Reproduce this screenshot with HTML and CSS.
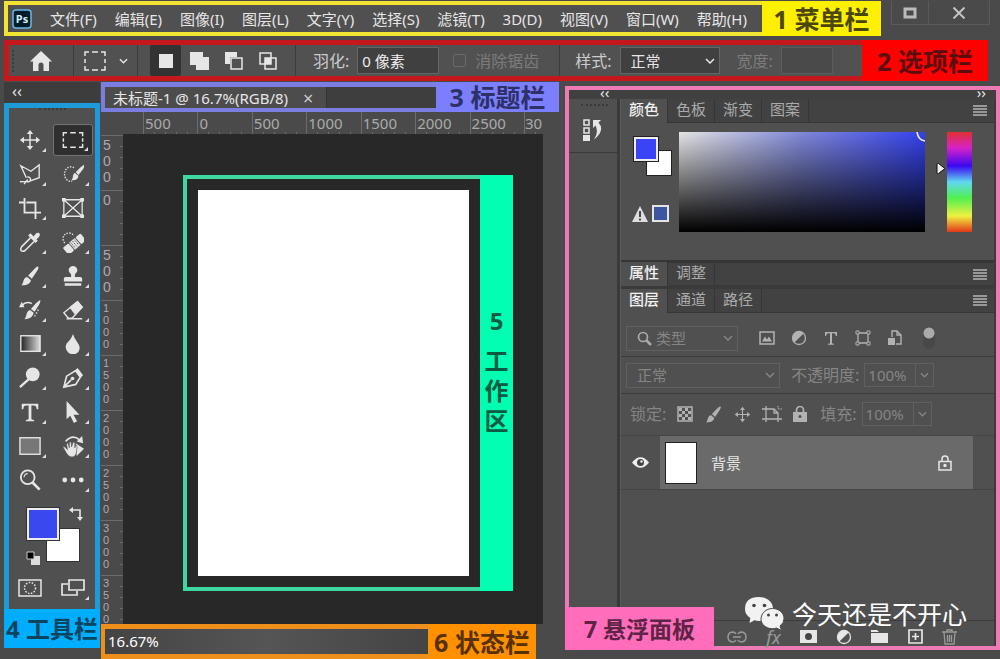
FILE: index.html
```html
<!DOCTYPE html>
<html lang="zh-CN">
<head>
<meta charset="utf-8">
<meta name="viewport" content="width=device-width, initial-scale=1">
<title>未标题-1 @ 16.7%(RGB/8)</title>
<link rel="stylesheet" href="styles.css">
</head>
<body>
<svg class="defs" aria-hidden="true">
  <defs>
    <linearGradient id="fade"><stop offset="0" stop-color="#222"/><stop offset="1" stop-color="#ddd"/></linearGradient>
    <symbol id="chevron" viewBox="0 0 10 6"><path d="M1 1l4 4 4-4" fill="none" stroke="currentColor" stroke-width="1.5"/></symbol>
    <symbol id="lines" viewBox="0 0 14 11"><path d="M0 1h14M0 4h14M0 7h14M0 10h14" stroke="currentColor" stroke-width="1.3"/></symbol>
    <symbol id="brush" viewBox="0 0 24 24"><path d="M21 2q1 1-1 4l-6 9-4-3.500 7-7.500q3-3 4-2zM9 13l4 3.500c-1 5-6 5.500-10.500 5.500 3-2 1.500-8.500 6.500-9z" fill="currentColor"/></symbol>
    <symbol id="move" viewBox="0 0 24 24"><path d="M12 4v16M4 12h16" stroke="currentColor" stroke-width="1.6"/><path d="M12 1l3.500 4.500h-7zM12 23l3.500-4.500h-7zM1 12l4.500-3.500v7zM23 12l-4.500-3.500v7z" fill="currentColor"/></symbol>
    <symbol id="halftone" viewBox="0 0 16 16"><circle cx="8" cy="8" r="6.500" fill="none" stroke="currentColor" stroke-width="1.300"/><path d="M12.600 3.400A6.500 6.500 0 1 0 3.400 12.600z" fill="currentColor"/></symbol>
    <symbol id="type" viewBox="0 0 24 24"><path d="M3 3h18v6h-1.700c-.3-2.800-1-4-3.300-4h-2.500v14c0 1.200.8 1.500 3 1.600V22H7.500v-1.400c2.200-.1 3-.4 3-1.600V5H8C5.700 5 5 6.200 4.700 9H3z" fill="currentColor"/></symbol>
  </defs>
</svg>

<header class="top">
  <nav class="menubar" aria-label="菜单栏">
    <svg class="logo" viewBox="0 0 20 20" aria-label="Ps"><rect x="1" y="1" width="18" height="18" rx="3" fill="#001d2b" stroke="#69b7e8" stroke-width="1.500"/><text x="10" y="14" text-anchor="middle" class="logo-text">Ps</text></svg>
    <button>文件(F)</button><button>编辑(E)</button><button>图像(I)</button><button>图层(L)</button><button>文字(Y)</button><button>选择(S)</button><button>滤镜(T)</button><button>3D(D)</button><button>视图(V)</button><button>窗口(W)</button><button>帮助(H)</button>
  </nav>
  <strong class="tag tag-yellow">1 菜单栏</strong>
  <div class="window-buttons">
    <button aria-label="最大化"><svg width="14" height="12" viewBox="0 0 14 12"><path d="M2 2h10v8H2z" fill="none" stroke="#bbb" stroke-width="3"/></svg></button>
    <button aria-label="关闭"><svg width="14" height="12" viewBox="0 0 14 12"><path d="M1.500.5l11 11M12.500.5l-11 11" stroke="#c4c4c4" stroke-width="2"/></svg></button>
  </div>
</header>

<section class="options" aria-label="选项栏">
  <div class="options-row">
    <span class="grip-v"></span>
    <button class="home" aria-label="主页"><svg width="22" height="20" viewBox="0 0 22 20"><path d="M11 0l11 10.500h-3V20h-5.500v-6a2.500 2.500 0 0 0-5 0v6H3v-9.500H0z" fill="currentColor"/></svg></button>
    <button class="preset" aria-label="矩形选框">
      <svg width="22" height="20" viewBox="0 0 22 20"><path d="M1 5V1h4M8 1h6M17 1h4v4M21 8v4M21 15v4h-4M14 19H8M5 19H1v-4M1 12V8" fill="none" stroke="currentColor" stroke-width="1.500"/></svg>
      <svg width="9" height="6"><use href="#chevron"/></svg>
    </button>
    <div class="modes">
      <button class="active" aria-label="新选区"><svg width="14" height="14"><path d="M0 0h14v14H0z" fill="currentColor"/></svg></button>
      <button aria-label="添加"><svg width="20" height="20"><path d="M0 1h13v5h6v13H6v-5H0z" fill="currentColor"/></svg></button>
      <button aria-label="减去"><svg width="18" height="18"><path d="M0 0h12v5H5v7H0z" fill="currentColor"/><path d="M6 6h11v11H6z" fill="none" stroke="currentColor" stroke-width="1.500"/></svg></button>
      <button aria-label="交叉"><svg width="18" height="18"><path d="M1 1h11v11H1zM6 6h11v11H6z" fill="none" stroke="currentColor" stroke-width="1.500"/><path d="M6 6h6v6H6z" fill="currentColor"/></svg></button>
    </div>
    <div class="field feather"><label for="feather">羽化:</label><input id="feather" class="box" value="0 像素"></div>
    <label class="field alias dim"><input type="checkbox" disabled>消除锯齿</label>
    <div class="field style-field"><label for="style">样式:</label>
      <span class="select"><select id="style"><option>正常</option></select><svg width="10" height="6"><use href="#chevron"/></svg></span></div>
    <div class="field dim"><label for="width">宽度:</label><input id="width" class="box box-short" disabled></div>
  </div>
  <strong class="tag tag-red">2 选项栏</strong>
</section>

<main class="main">
  <aside class="left">
    <button class="collapse" aria-label="折叠">‹‹</button>
    <div class="toolframe">
      <span class="grip-h"></span>
      <div class="tools">
        <button class="more" aria-label="移动"><svg viewBox="0 0 24 24"><use href="#move"/></svg></button>
        <button class="more active" aria-label="矩形选框"><svg viewBox="0 0 24 24"><path d="M1.500 8V4h4M9 4h6M18.500 4h4v4M22.500 10v4M22.500 16v4h-4M15 20H9M5.500 20h-4v-4M1.500 14v-4" fill="none" stroke="currentColor" stroke-width="1.600"/></svg></button>
        <button class="more" aria-label="多边形套索"><svg viewBox="0 0 24 24"><path d="M8 16L2 3l11 6 9-7v14l-11 4M9 15.500a2.600 2.600 0 1 1-.5 4.500M8.500 20L1 20.500M9.500 18l-4 5" fill="none" stroke="currentColor" stroke-width="1.500"/></svg></button>
        <button class="more" aria-label="快速选择"><svg viewBox="0 0 24 24"><path d="M13 5a7 8 0 1 0-2 15" fill="none" stroke="currentColor" stroke-width="1.500" stroke-dasharray="1.500 1.500"/><path d="M24 2q1 2-2 6l-4 5-3-3 5-5zM14 11l4 3c-1 5-4 5-8 5 3-2 1-7 4-8z" fill="currentColor"/></svg></button>
        <button class="more" aria-label="裁剪"><svg viewBox="0 0 24 24"><path d="M6 1v16h18M0 6h5M8 6h10v18" fill="none" stroke="currentColor" stroke-width="2"/></svg></button>
        <button aria-label="画框"><svg viewBox="0 0 24 24"><path d="M2 3h20v18H2zM2 3l20 18M22 3L2 21" fill="none" stroke="currentColor" stroke-width="1.400"/><path d="M0 1h4v4H0zM20 1h4v4h-4zM0 19h4v4H0zM20 19h4v4h-4z" fill="currentColor"/></svg></button>
        <button class="more" aria-label="吸管"><svg viewBox="0 0 24 24"><path d="M12.500 7.500L3 17q-2 3-.5 4.500T7 21l9.500-9.500" fill="none" stroke="currentColor" stroke-width="1.700"/><path d="M16 6c2-3 4-5 6-3.500s0 4.500-3 6.500l1.500 1.500-2.500 2.500-8-8L12.500 2.500z" fill="currentColor"/></svg></button>
        <button class="more" aria-label="修复画笔"><svg viewBox="0 0 24 24"><path d="M3 13a6 6 0 1 1 9-9" fill="none" stroke="currentColor" stroke-width="1.500" stroke-dasharray="1.500 1.500"/><g transform="rotate(-40 14 14)" fill="currentColor"><rect x="1" y="9" width="8" height="10" rx="1.500"/><rect x="19" y="9" width="7" height="10" rx="1.500"/><path d="M10 9h8v10h-8z"/><path d="M11.500 10v8M14 10v8M16.500 10v8" stroke="#4f4f4f" stroke-dasharray="1.500 1"/></g></svg></button>
        <button class="more" aria-label="画笔"><svg viewBox="0 0 24 24"><use href="#brush"/></svg></button>
        <button class="more" aria-label="仿制图章"><svg viewBox="0 0 24 24"><path d="M12 1a4.500 4.500 0 0 1 3 8c-1 1-1 2-1 4h6q2 0 2 2v3H2v-3q0-2 2-2h6c0-2 0-3-1-4a4.500 4.500 0 0 1 3-8zM3 20h18v2.500H3z" fill="currentColor"/></svg></button>
        <button class="more" aria-label="历史记录画笔"><svg viewBox="0 0 24 24"><path d="M23 1q1 1-1 5l-5 8-4-3 6-7zM12 12l4 3c-1 5-5 7-10 7 3-3 1-8 6-10z" fill="currentColor"/><path d="M3 7q5-5 11-2" fill="none" stroke="currentColor" stroke-width="1.500"/><path d="M0 9l3-6 3 6z" fill="currentColor"/><path d="M17 19l5-9" stroke="currentColor" stroke-width="1.500" stroke-dasharray="1.500 2"/></svg></button>
        <button class="more" aria-label="橡皮擦"><svg viewBox="0 0 24 24"><path d="M2 15l5 6h4l11-12-5-6zM5 21.500h17" fill="none" stroke="currentColor" stroke-width="1.500"/><path d="M8 9l9-7 6 7-9 8z" fill="currentColor"/></svg></button>
        <button class="more" aria-label="渐变"><svg viewBox="0 0 24 24"><rect x="2" y="3" width="21" height="17" fill="url(#fade)" stroke="currentColor" stroke-width="1.500"/></svg></button>
        <button class="more" aria-label="模糊"><svg viewBox="0 0 24 24"><path d="M12 1q1.500 5 5 9.500t1.500 9Q16 23 12 23t-6.500-3.500-.5-8Q10.500 6 12 1z" fill="currentColor"/></svg></button>
        <button class="more" aria-label="减淡"><svg viewBox="0 0 24 24"><circle cx="15" cy="8" r="7.500" fill="currentColor"/><path d="M11 13l-10 9" stroke="currentColor" stroke-width="2.500"/></svg></button>
        <button class="more" aria-label="钢笔"><svg viewBox="0 0 24 24"><path d="M2 22l3-12L15 4l5 7-5 8zM2 22l8-8" fill="none" stroke="currentColor" stroke-width="1.800"/><circle cx="11.500" cy="12.500" r="2" fill="currentColor"/><path d="M14 4l3-3 6 8-3 3z" fill="currentColor"/></svg></button>
        <button class="more" aria-label="文字"><svg viewBox="0 0 24 24"><use href="#type"/></svg></button>
        <button class="more" aria-label="路径选择"><svg viewBox="0 0 24 24"><path d="M5 0l14 15h-6.500l4 7-3.500 2-4-8-4 4z" fill="currentColor"/></svg></button>
        <button class="more" aria-label="矩形"><svg viewBox="0 0 24 24"><rect x="1" y="3" width="22" height="18" fill="#777" stroke="currentColor" stroke-width="1.500"/></svg></button>
        <button class="more" aria-label="旋转视图"><svg viewBox="0 0 24 24"><path d="M4 7q7-8 15-2" fill="none" stroke="currentColor" stroke-width="1.800"/><path d="M16 7l6-6 1 8zM15 9l9 6-8 8z" fill="currentColor"/><path d="M1 13q1-1 3 1l2 2-1-6q1-2 2 0l1 4V8q1-1 2 0l.5 5L12 8q2-1 2 1v5l1-3q2 0 1.500 2l-1 7q-1 4-4.500 4-4 0-6-4z" fill="currentColor" stroke="#4f4f4f" stroke-width=".6"/></svg></button>
        <button aria-label="缩放"><svg viewBox="0 0 24 24"><circle cx="9.500" cy="9" r="7.500" fill="none" stroke="currentColor" stroke-width="2"/><path d="M5.500 9a4 4 0 0 1 4-4" fill="none" stroke="currentColor" stroke-width="1.300"/><path d="M14.500 14.500l8 8" stroke="currentColor" stroke-width="3"/></svg></button>
        <button class="more" aria-label="编辑工具栏"><svg viewBox="0 0 24 24"><g fill="currentColor"><circle cx="3" cy="12" r="2.600"/><circle cx="12" cy="12" r="2.600"/><circle cx="21" cy="12" r="2.600"/></g></svg></button>
      </div>
      <div class="swatches">
        <span class="sw sw-back"></span><span class="sw sw-front"></span>
        <svg class="swap" viewBox="0 0 14 14" width="14" height="14"><path d="M3 3h8v8" fill="none" stroke="currentColor" stroke-width="1.600"/><path d="M0 3l4-3v6zM11 14l-3-4h6z" fill="currentColor"/></svg>
        <svg class="reset" viewBox="0 0 14 14" width="14" height="14"><path d="M5 5h9v9H5z" fill="#ddd"/><path d="M1 1h7v7H1z" fill="#000" stroke="#ccc"/></svg>
      </div>
      <div class="view-buttons">
        <button aria-label="快速蒙版"><svg width="24" height="20" viewBox="0 0 24 20"><path d="M1 2h22v16H1z" fill="none" stroke="currentColor" stroke-width="1.500"/><circle cx="12" cy="10" r="5.500" fill="none" stroke="currentColor" stroke-width="1.500" stroke-dasharray="1.500 1.500"/></svg></button>
        <button class="more" aria-label="屏幕模式"><svg width="24" height="20" viewBox="0 0 24 20"><path d="M7 6H1v11h15v-4M8 2h15v10H8z" fill="none" stroke="currentColor" stroke-width="1.700"/></svg></button>
      </div>
      <strong class="tag tag-blue">4 工具栏</strong>
    </div>
  </aside>

  <section class="document">
    <div class="title-row">
      <div class="title-frame"><div class="tab">未标题-1 @ 16.7%(RGB/8)<button aria-label="关闭文档">×</button></div></div>
      <strong class="tag tag-violet">3 标题栏</strong>
    </div>
    <div class="ruler-x"><span>500</span><span>0</span><span>500</span><span>1000</span><span>1500</span><span>2000</span><span>2500</span><span>30</span></div>
    <div class="work-row">
      <div class="ruler-y"><span>5<br>0<br>0</span><span>0</span><span>5<br>0<br>0</span><span class="four">1<br>0<br>0<br>0</span><span class="four">1<br>5<br>0<br>0</span><span class="four">2<br>0<br>0<br>0</span><span class="four">2<br>5<br>0<br>0</span><span class="four">3<br>0<br>0<br>0</span><span class="four">3<br>5<br>0<br>0</span></div>
      <div class="canvas">
        <div class="work-frame"><div class="page"></div></div>
        <strong class="tag tag-green"><span>5</span><span>工</span><span>作</span><span>区</span></strong>
      </div>
    </div>
    <footer class="status-row"><div class="status">16.67%</div><strong class="tag tag-orange">6 状态栏</strong></footer>
  </section>

  <aside class="floating" aria-label="悬浮面板">
    <div class="dock-head"><button aria-label="展开">‹‹</button><button aria-label="折叠">››</button></div>
    <div class="dock-body">
      <div class="mini">
        <span class="grip-h"></span>
        <button aria-label="历史记录"><svg width="22" height="24" viewBox="0 0 22 24"><path d="M2 2h5v5H2zM2 10h5v5H2z" fill="none" stroke="currentColor" stroke-width="1.500"/><path d="M1 17h7v6H1z" fill="currentColor"/><path d="M11 2h8l-2.500 2.500q7 8-4.500 17 5-7 1.500-14L11 10z" fill="currentColor"/></svg></button>
      </div>
      <div class="panels">
        <div class="tabs"><button class="on">颜色</button><button>色板</button><button>渐变</button><button>图案</button><svg width="14" height="11"><use href="#lines"/></svg></div>
        <div class="color-body">
          <div class="color-left">
            <div class="mini-swatches"><span class="ms-back"></span><span class="ms-front"></span></div>
            <div class="warn"><svg width="16" height="16" viewBox="0 0 16 16"><path d="M8 0l8 16H0z" fill="#ddd"/><path d="M8 5v6M8 12.500v2" stroke="#444" stroke-width="2"/></svg><span class="safe"></span></div>
          </div>
          <div class="spectrum"><svg width="9" height="10" viewBox="0 0 9 10"><path d="M1 0q1 8 8 9" fill="none" stroke="#e8e8ff" stroke-width="1.700"/></svg></div>
          <svg class="marker" width="11" height="13" viewBox="0 0 11 13"><path d="M2 2q0-1 1.500-.5L10 6.500 3.500 11.500Q2 12 2 11z" fill="#eee" stroke="#111"/></svg>
          <div class="hue"></div>
        </div>
        <div class="tabs tabs-closed"><button class="on">属性</button><button>调整</button><svg width="14" height="11"><use href="#lines"/></svg></div>
        <div class="tabs"><button class="on">图层</button><button>通道</button><button>路径</button><svg width="14" height="11"><use href="#lines"/></svg></div>
        <div class="row filter">
          <span class="select kind"><svg class="lens" width="15" height="15" viewBox="0 0 15 15"><circle cx="6" cy="6" r="4.500" fill="none" stroke="#aaa" stroke-width="1.700"/><path d="M9.500 9.500L14 14" stroke="#aaa" stroke-width="2.500"/></svg><select aria-label="类型" disabled><option>类型</option></select><svg width="10" height="6"><use href="#chevron"/></svg></span>
          <div class="filter-icons">
            <svg width="16" height="14" viewBox="0 0 16 14"><path d="M1 1h14v12H1z" fill="none" stroke="currentColor" stroke-width="1.500"/><path d="M3 10.500l3-5 2 3 2-3 3 5z" fill="currentColor"/></svg>
            <svg width="16" height="16"><use href="#halftone"/></svg>
            <svg width="16" height="16"><use href="#type"/></svg>
            <svg width="16" height="16" viewBox="0 0 16 16"><path d="M3 3h10v10H3z" fill="none" stroke="currentColor" stroke-width="1.300"/><path d="M1 1h3v3H1zM12 1h3v3h-3zM1 12h3v3H1zM12 12h3v3h-3z" fill="#4f4f4f" stroke="currentColor"/></svg>
            <svg width="16" height="16" viewBox="0 0 16 16"><path d="M5 7V1h5l4 4v9H9M10 1v4h4" fill="none" stroke="currentColor" stroke-width="1.400"/><path d="M1 8h7v7H1z" fill="currentColor"/></svg>
          </div>
          <span class="toggle"></span>
        </div>
        <div class="row blend">
          <span class="select mode"><select aria-label="混合模式" disabled><option>正常</option></select><svg width="10" height="6"><use href="#chevron"/></svg></span>
          <label for="opacity">不透明度:</label>
          <span class="percent"><input id="opacity" value="100%" disabled><svg width="9" height="6"><use href="#chevron"/></svg></span>
        </div>
        <div class="row lock">
          <span>锁定:</span>
          <div class="lock-icons">
            <svg width="16" height="16" viewBox="0 0 16 16"><path d="M1 1h14v14H1z" fill="none" stroke="currentColor" stroke-width="1.500"/><path d="M2 2h3v3H2zM8 2h3v3H8zM5 5h3v3H5zM11 5h3v3h-3zM2 8h3v3H2zM8 8h3v3H8zM5 11h3v3H5zM11 11h3v3h-3z" fill="currentColor"/></svg>
            <svg width="19" height="19"><use href="#brush"/></svg>
            <svg width="17" height="17"><use href="#move"/></svg>
            <svg width="20" height="16" viewBox="0 0 20 16"><path d="M4 0v16M0 3h12l4 4v9M0 13h20M12 3v4h4" fill="none" stroke="currentColor" stroke-width="1.300"/><path d="M16 3h4M16 0v3" stroke="currentColor" stroke-dasharray="1.500 1"/></svg>
            <svg width="14" height="16" viewBox="0 0 14 16"><path d="M3.500 7V4a3.500 3.500 0 0 1 7 0v3" fill="none" stroke="currentColor" stroke-width="1.700"/><path d="M0 6h14v10H0z" fill="currentColor"/><circle cx="7" cy="10.500" r="1.500" fill="#4f4f4f"/></svg>
          </div>
          <label for="fill">填充:</label>
          <span class="percent"><input id="fill" value="100%" disabled><svg width="9" height="6"><use href="#chevron"/></svg></span>
        </div>
        <div class="layer">
          <button class="eye" aria-label="可见性"><svg width="17" height="11" viewBox="0 0 17 11"><path d="M0 5.500Q8.500-5 17 5.500 8.500 16 0 5.500z" fill="#eee"/><circle cx="8.500" cy="5.500" r="3.500" fill="#444"/><circle cx="9.500" cy="4.500" r="1.200" fill="#eee"/></svg></button>
          <div class="layer-item"><span class="thumb"></span><span>背景</span>
            <svg width="14" height="16" viewBox="0 0 14 16"><path d="M4 6V4a3 3 0 0 1 6 0v2M1 6.500h12V15H1z" fill="none" stroke="currentColor" stroke-width="1.500"/><circle cx="7" cy="10.500" r="1.700" fill="currentColor"/></svg></div>
        </div>
        <div class="empty"></div>
        <div class="layer-actions">
          <button class="off" aria-label="链接图层"><svg width="20" height="12" viewBox="0 0 20 12"><path d="M9 3Q8 1 5.500 1 1 1.500 1 6t4.500 5Q8 11 9 9M11 3q1-2 3.500-2Q19 1.500 19 6t-4.500 5q-2.500 0-3.500-2M6 6h8" fill="none" stroke="currentColor" stroke-width="1.500"/></svg></button>
          <button class="off fx">fx</button>
          <button aria-label="蒙版"><svg width="17" height="13" viewBox="0 0 17 13"><path d="M0 0h17v13H0z" fill="currentColor"/><circle cx="8.500" cy="6.500" r="3.500" fill="#444"/></svg></button>
          <button aria-label="调整图层"><svg width="16" height="16"><use href="#halftone"/></svg></button>
          <button aria-label="新建组"><svg width="17" height="13" viewBox="0 0 17 13"><path d="M0 0h6l2 2h-8zM0 3h17v10H0z" fill="currentColor"/></svg></button>
          <button aria-label="新建图层"><svg width="15" height="15" viewBox="0 0 15 15"><path d="M1 1h13v13H1zM7.500 4v7M4 7.500h7" fill="none" stroke="currentColor" stroke-width="1.700"/></svg></button>
          <button class="off" aria-label="删除"><svg width="15" height="16" viewBox="0 0 15 16"><path d="M0 3h15M5 3V1h5v2M2 3l1 12h9l1-12M5.500 6v7M7.500 6v7M9.500 6v7" fill="none" stroke="currentColor" stroke-width="1.300"/></svg></button>
        </div>
      </div>
    </div>
    <strong class="tag tag-pink">7 悬浮面板</strong>
    <div class="watermark">
      <svg width="40" height="34" viewBox="0 0 40 34"><path d="M14 0c8 0 14 5 14 11.500S22 24 14 24q-2.500 0-4.500-.8L4.500 26l.8-5Q0 17.500 0 12 0 0 14 0z" fill="#f2f2f2"/><path d="M27.500 11.500C34 11.500 39 16 39 21.500q0 4.500-4 7.500l1.500 4.500-5-2.500q-2 .7-4 .7C21 31.700 16 27.500 16 22s5-10.500 11.500-10.500z" fill="#f2f2f2" stroke="#4a4a4a"/><g fill="#444"><circle cx="9" cy="8.500" r="1.800"/><circle cx="19.500" cy="8.500" r="1.800"/><circle cx="23.500" cy="18" r="1.500"/><circle cx="31.500" cy="18" r="1.500"/></g></svg>
      <span>今天还是不开心</span>
    </div>
  </aside>
</main>
</body>
</html>
```
FILE: styles.css
```css
* { box-sizing: border-box; }
body {
  margin: 0;
  min-height: 100vh;
  display: flex;
  flex-direction: column;
  background: #4a4a4a;
  color: #e6e6e6;
  font: 16px/20px "Noto Sans", "Noto Sans CJK SC", sans-serif;
  white-space: nowrap;
}
button, input, select { font: inherit; color: inherit; border: 0; padding: 0; margin: 0; background: none; appearance: none; }
button { display: flex; align-items: center; justify-content: center; }
input:disabled, select:disabled { opacity: 1; }
svg { flex: none; display: block; }
.defs { position: absolute; width: 0; height: 0; }
.tag { display: flex; align-items: center; justify-content: center; flex: none; font-size: 25px; line-height: 32px; font-weight: 700; }

/* Menu bar */
.top { display: flex; height: 36px; padding: 1px 10px 0 4px; }
.menubar { display: flex; align-items: center; justify-content: space-between; width: 758px; border: 4px solid #f0e332; border-right: 0; background: #505050; padding: 0 15px 0 4px; font-size: 15px; }
.menubar .logo { width: 20px; height: 20px; }
.logo-text { font: 700 11px "Noto Sans", sans-serif; fill: #d8eefc; }
.tag-yellow { width: 119px; background: #fff000; color: #4b4600; }
.window-buttons { display: flex; margin-left: auto; height: 24px; border: 1px solid #5a5a5a; border-top: 0; }
.window-buttons button { width: 36px; }
.window-buttons button + button { width: 61px; border-left: 1px solid #5a5a5a; }

/* Options bar */
.options { display: flex; height: 41px; margin: 4px 12px 0 4px; }
.options-row { display: flex; align-items: center; flex: 1; min-width: 0; border: 5px solid #c4181c; border-right: 0; background: #515151; }
.grip-v { width: 3px; height: 22px; margin-left: 3px; border-left: 2px dotted #3b3b3b; }
.home { width: 59px; height: 31px; padding-right: 6px; border-right: 1px solid #3d3d3d; }
.preset { gap: 13px; width: 64px; height: 31px; border-right: 1px solid #3d3d3d; }
.modes { display: flex; gap: 3px; height: 31px; width: 158px; padding-left: 12px; border-right: 1px solid #3d3d3d; }
.modes button { width: 31px; }
.modes .active { background: #333; border-radius: 2px; }
.field { display: flex; align-items: center; gap: 8px; }
.feather { margin-left: 17px; color: #ccc; }
.box { width: 82px; height: 27px; padding: 0 4px; font-size: 15px; color: #eee; background: #404040; border: 1px solid #666; }
.box-short { width: 52px; background: #4a4a4a; border-color: #5c5c5c; }
.dim { color: #7c7c7c; }
.alias { gap: 9px; margin-left: 14px; padding-right: 20px; height: 31px; border-right: 1px solid #3d3d3d; }
.alias input { width: 13px; height: 13px; border: 1px solid #6a6a6a; border-radius: 2px; }
.style-field { margin: 0 17px 0 15px; color: #ccc; }
.select { display: grid; align-items: center; grid-template-columns: 1fr auto; height: 27px; border: 1px solid #666; }
.select select { grid-area: 1 / 1 / 2 / 3; height: 25px; width: 100%; padding-left: 10px; font-size: 15px; }
.select > svg:last-child { grid-area: 1 / 2; margin-right: 4px; pointer-events: none; }
.style-field .select { width: 100px; background: #404040; color: #e6e6e6; }
.tag-red { width: 126px; background: #f00; color: #5b0d0d; }

.main { display: flex; flex: 1; min-height: 0; padding-top: 1px; }

/* Tool column */
.left { display: flex; flex-direction: column; width: 96px; margin: 0 1px 0 4px; padding-bottom: 11px; background: linear-gradient(#3d3d3d 21px, transparent 21px); }
.collapse { height: 21px; width: 26px; font-size: 16px; line-height: 16px; padding-bottom: 4px; }
.toolframe { display: flex; flex-direction: column; flex: 1; border: 5px solid #1c9bd8; border-bottom: 0; background: #505050; }
.grip-h { width: 27px; height: 3px; border-top: 2px dotted #3a3a3a; align-self: center; }
.tools { display: grid; grid-template-columns: 40px 40px; grid-auto-rows: 32px; gap: 2px 3px; margin: 13px 0 0 1px; }
.tools button, .view-buttons button { position: relative; }
.tools svg { width: 22px; height: 22px; }
.tools .active { background: #2f2f2f; border: 1px solid #727272; border-radius: 3px; }
.more::after { content: ""; position: absolute; right: 4px; bottom: 4px; border-left: 4px solid transparent; border-bottom: 4px solid #ddd; }
.swatches { position: relative; height: 58px; margin-top: 11px; }
.sw { position: absolute; width: 34px; height: 34px; border: 1px solid #333; }
.sw-front { left: 17px; top: 0; background: #3a48f0; box-shadow: inset 0 0 0 2px #eee; }
.sw-back { left: 37px; top: 21px; background: #fff; }
.swap { position: absolute; left: 60px; top: 0; }
.reset { position: absolute; left: 17px; top: 44px; }
.view-buttons { display: grid; grid-template-columns: 40px 40px; grid-auto-rows: 32px; gap: 3px; margin: 7px 0 0 1px; }
.tag-blue { margin: auto -5px 0; height: 39px; background: #00adff; color: #0a4560; font-size: 24px; }

/* Document */
.document { display: flex; flex-direction: column; flex: 1; min-width: 0; }
.title-row { display: flex; height: 30px; margin-right: 6px; }
.title-frame { flex: 1; display: flex; border: 5px solid #7b7de0; border-bottom-width: 4px; border-left-width: 4px; border-right: 0; background: #3e3e3e; }
.tab { display: flex; align-items: center; gap: 15px; width: 222px; padding-left: 8px; font-size: 15px; background: #4c4c4c; border-right: 1px solid #333; }
.tab button { color: #ccc; font-size: 18px; }
.tag-violet { width: 123px; background: #7b7fff; color: #2e3068; }
.ruler-x { display: grid; grid-template-columns: repeat(7, 1fr) 19px; height: 22px; padding-left: 42px; margin-right: 22px; background: #4a4a4a; color: #aaa; font-size: 15px; }
.ruler-x span { padding-left: 1px; border-left: 1px solid #6c6c6c; line-height: 23px; background: repeating-linear-gradient(90deg, transparent 0 10px, #6c6c6c 10px 11px) bottom / 100% 3px no-repeat; }
.ruler-x span:last-child { padding-left: 0; }
.work-row { display: flex; flex: 1; min-height: 0; }
.ruler-y { width: 22px; padding-top: 1px; color: #aaa; font: 14px/16px "Liberation Sans", sans-serif; }
.ruler-y span { display: block; height: 55px; padding: 1px 0 0 2px; border-top: 1px solid #6c6c6c; background: repeating-linear-gradient(transparent 0 10px, #6c6c6c 10px 11px) right / 3px 100% no-repeat; }
.ruler-y span:last-child { height: 49px; }
.ruler-y .four { line-height: 12px; font-size: 11px; }
.canvas { display: flex; flex: 1; margin-right: 22px; padding: 41px 30px 33px 60px; background: #282828; }
.work-frame { flex: 1; display: flex; padding: 11px; border: 4px solid #3ed8a0; border-right: 0; }
.page { flex: 1; background: #fff; }
.tag-green { flex-direction: column; width: 33px; background: #00ffb0; color: #0b5a42; font-size: 24px; line-height: 30px; padding-bottom: 25px; }
.tag-green span:first-child { margin-bottom: 10px; }
.status-row { display: flex; height: 35px; margin-right: 29px; }
.status { flex: 1; padding-left: 3px; line-height: 25px; font-size: 15px; color: #fff; border: 5px solid #ee8f1c; border-left-width: 4px; border-right: 0; background: linear-gradient(90deg, #444, #555, #444); }
.tag-orange { width: 108px; background: #ff9000; color: #573100; }

/* Floating panels */
.floating { position: relative; display: flex; flex-direction: column; width: 435px; margin: 4px 0 9px; border: 4px solid #ee7ab6; background: #505050; }
.dock-head { display: flex; justify-content: space-between; height: 9px; padding: 0 10px 0 31px; background: #404040; }
.dock-head button { font-size: 15px; line-height: 6px; height: 4px; }
.dock-body { display: flex; flex: 1; min-height: 0; }
.mini { width: 51px; border-right: 3px solid #3a3a3a; padding-top: 5px; }
.mini .grip-h { display: block; margin-left: 12px; }
.mini button { width: 48px; height: 46px; border-bottom: 1px solid #3a3a3a; }
.panels { display: flex; flex-direction: column; flex: 1; min-width: 0; border-left: 1px solid #5a5a5a; border-right: 2px solid #3b3b3b; }
.tabs { display: flex; align-items: center; height: 24px; padding-right: 7px; background: #424242; border-bottom: 1px solid #363636; color: #aaa; }
.tabs button { width: 47px; height: 24px; padding-bottom: 4px; font-size: 15px; border-right: 1px solid #363636; }
.tabs .on { background: #505050; color: #f2f2f2; font-weight: 500; }
.tabs > svg { margin-left: auto; color: #b5b5b5; }
.tabs-closed { border-top: 1px solid #363636; border-bottom: 4px solid #3a3a3a; height: 27px; }
.color-body { display: flex; height: 139px; padding: 9px 22px 30px 11px; border-bottom: 2px solid #363636; }
.color-left { width: 47px; }
.mini-swatches { position: relative; height: 73px; }
.ms-front, .ms-back { position: absolute; width: 26px; height: 26px; border: 1px solid #222; }
.ms-front { left: 1px; top: 4px; background: #3a43f5; box-shadow: inset 0 0 0 2px #eee; }
.ms-back { left: 14px; top: 18px; background: #fff; }
.warn { display: flex; align-items: center; gap: 4px; }
.safe { width: 17px; height: 17px; background: #3b57a2; border: 2px solid #e4e4e4; }
.spectrum { display: flex; justify-content: flex-end; flex: 1; height: 100px; background: linear-gradient(transparent, #000), linear-gradient(90deg, #e4e4e4, #8088d8 50%, #3442ee); }
.marker { margin: 30px 1px 0 10px; }
.hue { width: 25px; height: 100px; background: linear-gradient(#e03030, #d522c8 16%, #3a08f0 34%, #60d8f0 50%, #50f050 66%, #f0f040 84%, #e03818); }
.row { display: flex; align-items: center; padding-left: 5px; border-bottom: 1px solid #3c3c3c; color: #858585; }
.filter { height: 44px; padding-top: 7px; }
.row .select { border-color: #606060; height: 25px; }
.row .select select { height: 23px; }
.kind { width: 112px; }
.kind .lens { grid-area: 1 / 1; margin-left: 10px; }
.row .kind select { padding-left: 29px; }
.filter-icons { display: flex; align-items: center; gap: 16px; margin-left: 21px; color: #b2b2b2; }
.toggle { width: 12px; height: 22px; margin-left: 20px; border-radius: 6px; background: radial-gradient(circle at 6px 6px, #aaa 0 5px, #484848 6px); }
.blend { height: 37px; }
.mode { width: 154px; margin-right: 11px; }
.percent { display: flex; align-items: center; width: 70px; height: 24px; margin-left: 5px; border: 1px solid #606060; padding-right: 4px; }
.percent input { width: 51px; height: 22px; margin-right: 4px; padding-left: 3px; font-size: 15px; border-right: 1px solid #606060; }
.lock { height: 41px; border-bottom: 0; padding-left: 9px; padding-bottom: 1px; }
.lock-icons { display: flex; align-items: center; gap: 11px; margin: 0 13px 0 11px; color: #b2b2b2; }
.layer { display: flex; height: 55px; border: 1px solid #444; border-width: 1px 0; }
.eye { width: 39px; }
.layer-item { display: flex; align-items: center; gap: 14px; flex: 1; margin-right: 21px; padding: 0 21px 0 5px; background: #6a6a6a; font-size: 15px; }
.layer-item svg { margin-left: auto; }
.thumb { width: 32px; height: 42px; background: #fff; border: 1px solid #222; }
.empty { flex: 1; border-bottom: 1px solid #3c3c3c; }
.layer-actions { display: flex; align-items: center; justify-content: space-between; height: 25px; padding: 6px 37px 0 106px; }
.off { color: #999; }
.fx { font: italic 18px/16px "Noto Sans", sans-serif; }
.tag-pink { position: absolute; left: -4px; bottom: -4px; width: 149px; height: 43px; background: #ff6dbb; color: #5e2444; font-size: 23px; }
.watermark { position: absolute; right: 29px; bottom: 14px; display: flex; align-items: center; gap: 7px; color: #fff; font-size: 25px; line-height: 36px; }
```
